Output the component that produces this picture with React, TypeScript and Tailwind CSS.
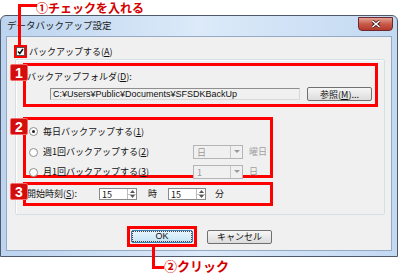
const jp = "font-['MS_UI_Gothic','Noto_Sans_CJK_JP',sans-serif]";

function Badge({ n }: { n: string }) {
  return (
    <div className="absolute left-[-16px] top-[-2px] w-[18px] h-[17px] bg-[#d40d0d] border border-[#f36b6b] rounded-[2px] flex items-center justify-center text-white text-[14px] font-bold leading-none font-['Liberation_Sans',sans-serif]">
      {n}
    </div>
  );
}

function Radio({ checked }: { checked?: boolean }) {
  return (
    <span className="w-[9px] h-[9px] rounded-full border border-[#8f8f8f] bg-white flex items-center justify-center shrink-0">
      {checked && <span className="w-[3px] h-[3px] rounded-full bg-[#222]" />}
    </span>
  );
}

function Combo({ value }: { value: string }) {
  return (
    <div className="w-[50px] h-[14px] border border-[#b5b5b5] bg-[#f0f0f0] flex items-center">
      <span className="flex-1 pl-[3px] text-[#9a9a9a] text-[9px] leading-none">{value}</span>
      <span className="w-[12px] h-[12px] border-l border-[#c8c8c8] flex items-center justify-center">
        <svg width="6" height="4" viewBox="0 0 6 4"><path d="M0 0h6L3 3z" fill="#9a9a9a" /></svg>
      </span>
    </div>
  );
}

function Spin({ value }: { value: string }) {
  return (
    <div className="w-[38px] h-[12px] border border-[#8a8a8a] bg-white flex items-center">
      <span className="flex-1 pl-[2px] text-[9px] leading-none text-[#111]">{value}</span>
      <span className="w-[9px] h-full border-l border-[#bcbcbc] flex flex-col">
        <span className="flex-1 border-b border-[#bcbcbc] flex items-center justify-center">
          <svg width="5" height="3" viewBox="0 0 5 3"><path d="M0 3h5L2.5 0z" fill="#555" /></svg>
        </span>
        <span className="flex-1 flex items-center justify-center">
          <svg width="5" height="3" viewBox="0 0 5 3"><path d="M0 0h5L2.5 3z" fill="#555" /></svg>
        </span>
      </span>
    </div>
  );
}

function Btn({ children, w }: { children: React.ReactNode; w: string }) {
  return (
    <div className={`${w} h-[14px] border border-[#707070] rounded-[2px] bg-gradient-to-b from-[#f6f6f6] to-[#dcdcdc] flex items-center justify-center text-[9px] leading-none text-[#111]`}>
      {children}
    </div>
  );
}

export default function App() {
  return (
    <div className={`w-[400px] h-[276px] bg-white relative overflow-hidden ${jp}`}>
      {/* top annotation */}
      <div className="h-[15px] pl-[36px] text-[12px] font-bold leading-[16px] text-[#d40000] font-['Noto_Sans_CJK_JP',sans-serif]">
        ①チェックを入れる
      </div>

      {/* window */}
      <div className="w-[398px] h-[242px] border border-[#4e5a6a] rounded-t-[6px] bg-gradient-to-r from-[#bcd4ef] via-[#dceaf9] to-[#c3d9f2] flex flex-col">
        <div className="h-[21px] flex items-center justify-between pl-[6px] pr-[4px]">
          <span className="text-[9.5px] text-[#1b1b1b] leading-none">データバックアップ設定</span>
          <div className="w-[35px] h-[14px] -mt-[5px] rounded-b-[4px] border border-[#6e2a2a] bg-gradient-to-b from-[#e2a195] via-[#c85a4a] to-[#b3392c] flex items-center justify-center">
            <svg width="10" height="8" viewBox="0 0 10 8">
              <path d="M1.5 1l7 6M8.5 1l-7 6" stroke="#3a1010" strokeWidth="3" />
              <path d="M1.5 1l7 6M8.5 1l-7 6" stroke="#fff" strokeWidth="1.6" />
            </svg>
          </div>
        </div>

        <div className="flex-1 px-[5px] pb-[5px]">
          <div className="h-[215px] bg-[#f0f0f0] border border-[#96a9c2] flex flex-col relative">
            {/* checkbox */}
            <div className="h-[22px] pt-[10px] pl-[9px] flex items-start gap-[4px]">
              <span className="w-[9px] h-[9px] border border-[#555] bg-white flex items-center justify-center">
                <svg width="7" height="7" viewBox="0 0 7 7"><path d="M1 3.5l1.8 2L6 1" stroke="#111" strokeWidth="1.5" fill="none" /></svg>
              </span>
              <span className="text-[9px] leading-[10px] text-[#111]">バックアップする(<span className="underline">A</span>)</span>
            </div>

            {/* group box */}
            <div className="ml-[8px] w-[370px] h-[156px] border border-[#d5dfe5] rounded-[2px] shadow-[inset_1px_1px_0_#fff] flex flex-col pl-[7px] pt-[3px]">
              {/* box 1 */}
              <div className="relative w-[355px] h-[44px] border-[3px] border-[#ff0000] flex flex-col pl-[1px] pt-[6px]">
                <Badge n="1" />
                <span className="text-[9px] leading-[10px] text-[#111]">バックアップフォルダ(<span className="underline">D</span>):</span>
                <div className="mt-[5px] flex items-center">
                  <div className="ml-[23px] w-[250px] h-[12px] border border-[#8e8e8e] border-b-[#d9d9d9] border-r-[#d9d9d9] bg-[#f0f0f0] pl-[2px] text-[9px] leading-[10px] text-[#111] font-['Liberation_Sans',sans-serif]">
                    C:¥Users¥Public¥Documents¥SFSDKBackUp
                  </div>
                  <div className="ml-[7px]">
                    <Btn w="w-[65px]">参照(<span className="underline">M</span>)...</Btn>
                  </div>
                </div>
              </div>

              {/* box 2 */}
              <div className="relative mt-[10px] w-[250px] h-[61px] border-[3px] border-[#ff0000] flex flex-col pl-[3px] pt-[6px]">
                <Badge n="2" />
                <div className="h-[11px] flex items-center gap-[5px] text-[9px] text-[#111]">
                  <Radio checked />
                  <span>毎日バックアップする(<span className="underline">1</span>)</span>
                </div>
                <div className="mt-[8px] h-[14px] flex items-center text-[9px] text-[#111]">
                  <Radio />
                  <span className="ml-[5px] w-[150px]">週1回バックアップする(<span className="underline">2</span>)</span>
                  <Combo value="日" />
                  <span className="ml-[6px] text-[#a0a0a0]">曜日</span>
                </div>
                <div className="mt-[6px] h-[14px] flex items-center text-[9px] text-[#111]">
                  <Radio />
                  <span className="ml-[5px] w-[150px]">月1回バックアップする(<span className="underline">3</span>)</span>
                  <Combo value="1" />
                  <span className="ml-[6px] text-[#a0a0a0]">日</span>
                </div>
              </div>

              {/* box 3 */}
              <div className="relative mt-[4px] w-[250px] h-[24px] border-[3px] border-[#ff0000] flex items-center pl-[1px] text-[9px] text-[#111]">
                <Badge n="3" />
                <span className="w-[72px]">開始時刻(<span className="underline">S</span>):</span>
                <Spin value="15" />
                <span className="ml-[11px] w-[20px]">時</span>
                <Spin value="15" />
                <span className="ml-[9px]">分</span>
              </div>
            </div>

            {/* buttons */}
            <div className="mt-[11px] flex items-center pl-[120px]">
              <div className="relative border-[3px] border-[#ff0000] p-[1px]">
                <div className="w-[62px] h-[13px] border border-[#3c7fb1] rounded-[2px] bg-gradient-to-b from-[#eaf6fd] to-[#c4e5f6] flex items-center justify-center text-[9px] leading-none text-[#111] font-['Liberation_Sans',sans-serif]">
                  <span className="border border-dotted border-[#444] px-[22px] leading-[9px]">OK</span>
                </div>
              </div>
              <div className="ml-[10px]">
                <Btn w="w-[65px]">キャンセル</Btn>
              </div>
            </div>
          </div>
        </div>
      </div>

      {/* annotation lines */}
      <div className="absolute left-[18px] top-[4px] w-[19px] h-[3px] bg-[#ff0000]" />
      <div className="absolute left-[18px] top-[4px] w-[3px] h-[42px] bg-[#ff0000]" />
      <div className="absolute left-[14px] top-[45px] w-[13px] h-[13px] border-[2px] border-[#ff0000]" />

      <div className="absolute left-[152px] top-[244px] w-[3px] h-[25px] bg-[#ff0000]" />
      <div className="absolute left-[152px] top-[266px] w-[12px] h-[3px] bg-[#ff0000]" />
      <div className="absolute left-[164px] top-[258px] text-[13px] font-bold leading-[16px] text-[#d40000] font-['Noto_Sans_CJK_JP',sans-serif]">
        ②クリック
      </div>
    </div>
  );
}
